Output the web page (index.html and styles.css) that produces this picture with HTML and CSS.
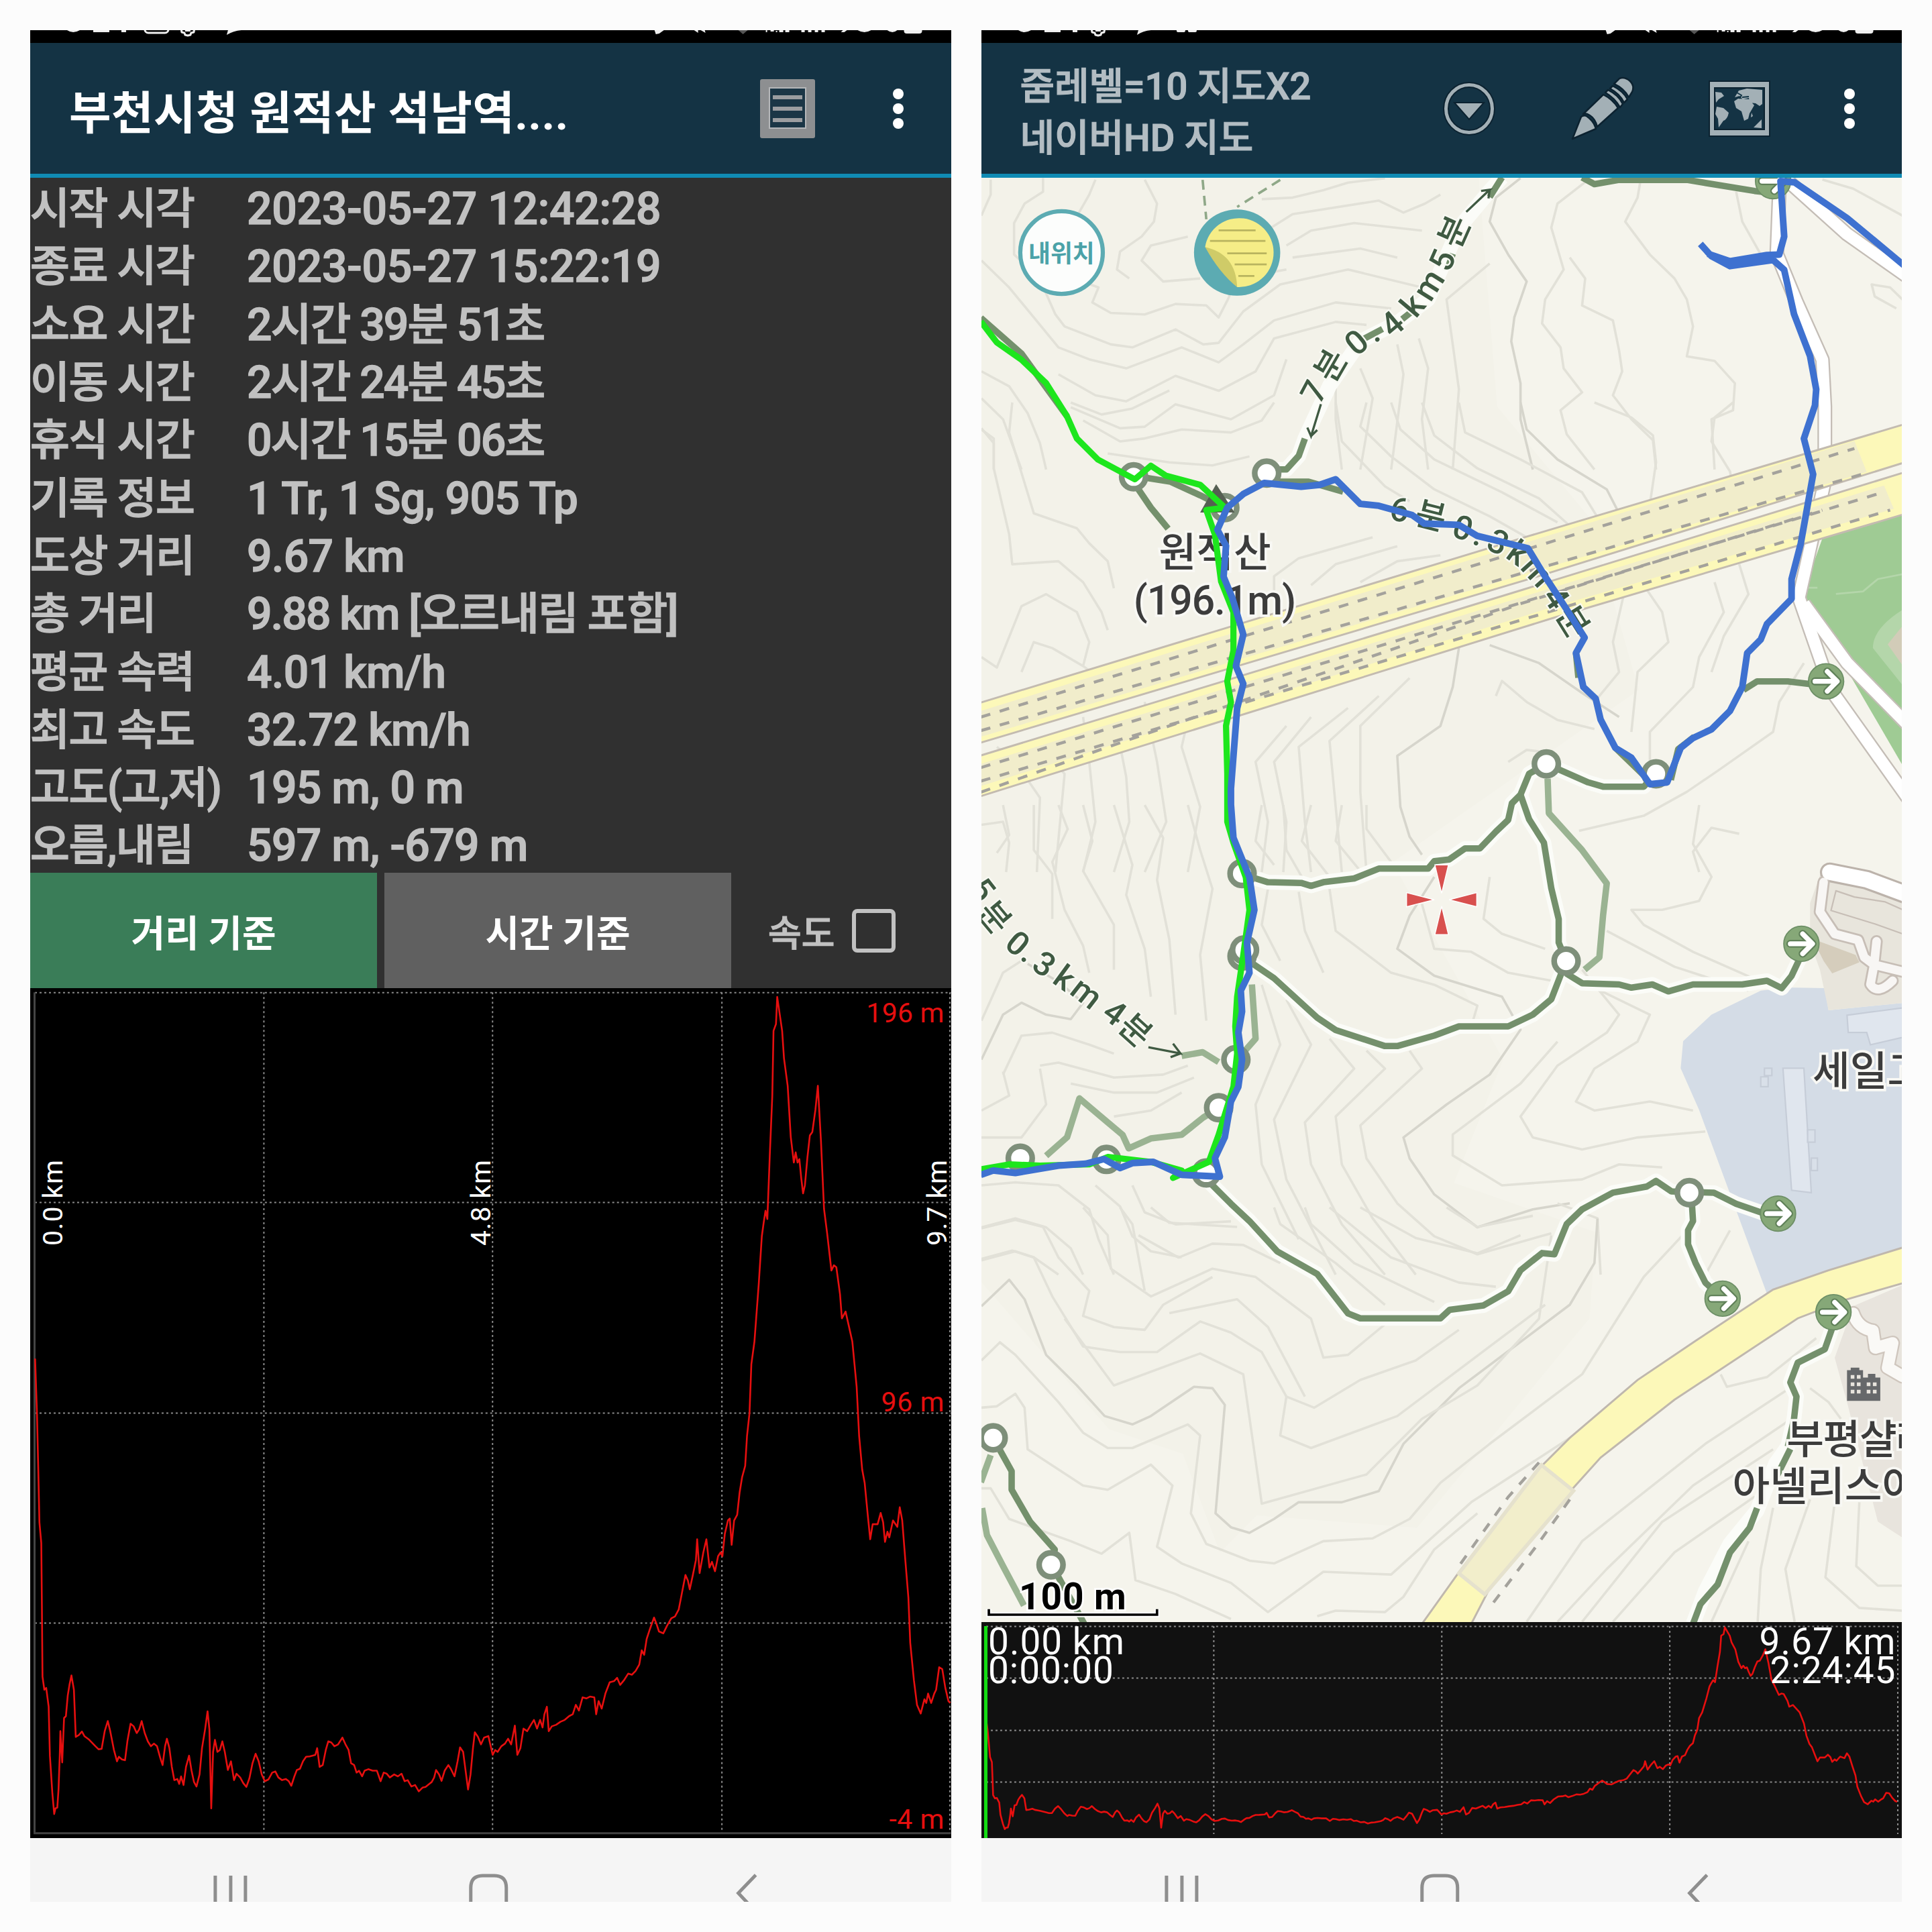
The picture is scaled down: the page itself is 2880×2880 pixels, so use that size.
FILE: index.html
```
<!DOCTYPE html>
<html lang="ko">
<head>
  <meta charset="UTF-8">
  <meta name="viewport" content="width=device-width, initial-scale=1.0">
  <title>부천시청 원적산 석남역</title>
  <link rel="stylesheet" href="styles.css">
</head>
<body>
  <!-- Shared shapes -->
  <svg class="defs" width="0" height="0">
    <defs>
      <polyline id="profile" points="57,45 60,190 62,330 64,480 67,535 68,700 69,890 72,925 75,920 79,970 81,1100 85,1200 88,1255 90,1240 93,1238 95,1190 97,1100 98,1035 101,1118 104,1000 107,995 110,940 113,910 116,887 120,925 123,1050 128,1045 133,1036 137,1048 145,1058 155,1075 160,1083 165,1082 170,1035 175,1008 179,1035 185,1085 190,1115 193,1103 198,1110 203,1112 207,1060 212,1015 217,1022 222,1040 226,1030 230,1008 235,1040 240,1062 245,1075 250,1068 255,1075 260,1105 264,1125 268,1075 271,1055 275,1080 279,1130 283,1165 288,1162 291,1175 294,1155 298,1178 302,1130 307,1100 311,1140 315,1170 319,1182 324,1150 328,1080 333,1030 337,982 340,1030 343,1240 346,1090 349,1058 353,1090 357,1085 361,1062 365,1090 370,1138 375,1115 380,1165 384,1148 390,1158 395,1173 400,1183 405,1160 410,1120 415,1095 420,1115 425,1150 430,1168 436,1163 442,1145 447,1142 452,1158 458,1165 464,1162 469,1168 473,1180 478,1155 482,1138 487,1135 492,1115 497,1103 503,1102 512,1098 515,1080 519,1130 524,1125 529,1085 533,1062 538,1065 543,1075 549,1070 556,1052 561,1070 566,1085 570,1120 575,1125 579,1145 583,1140 588,1155 592,1140 598,1136 605,1140 612,1140 618,1168 623,1145 628,1148 633,1158 640,1150 646,1155 652,1148 657,1168 662,1165 668,1182 674,1178 680,1195 686,1185 691,1183 697,1175 701,1170 705,1158 708,1138 713,1150 717,1167 722,1140 728,1125 732,1135 738,1155 743,1115 747,1078 752,1090 756,1140 760,1190 764,1150 768,1080 771,1038 776,1050 781,1070 786,1052 793,1048 800,1098 804,1085 808,1090 814,1075 820,1068 825,1055 830,1070 836,1020 840,1098 845,1080 850,1028 856,1035 862,1018 867,1005 872,1028 877,1005 881,1025 884,990 888,970 891,1035 896,1022 903,1018 910,1010 917,1005 924,995 930,990 935,965 940,980 946,945 952,948 958,943 965,945 968,990 972,955 977,975 983,935 990,905 997,902 1002,893 1007,912 1013,900 1020,882 1026,885 1032,875 1038,858 1042,820 1046,832 1050,790 1055,765 1062,733 1066,750 1070,770 1077,775 1083,755 1090,735 1096,730 1102,712 1107,670 1113,620 1117,635 1120,658 1125,620 1130,580 1132,525 1136,615 1142,560 1147,525 1152,600 1156,585 1161,610 1166,570 1170,560 1173,570 1177,510 1182,475 1185,470 1188,540 1192,475 1197,460 1201,400 1205,360 1210,330 1213,250 1217,190 1220,60 1225,0 1232,-153 1237,-280 1240,-316 1243,-348 1246,-326 1250,-498 1254,-653 1256,-826 1260,-844 1262,-916 1266,-871 1270,-826 1273,-753 1279,-680 1284,-544 1289,-476 1292,-503 1295,-476 1298,-485 1301,-435 1304,-394 1307,-416 1311,-489 1315,-548 1319,-557 1324,-616 1328,-680 1333,-535 1338,-353 1343,-289 1350,-189 1354,-203 1358,-198 1364,-126 1367,-62 1373,-80 1378,-44 1384,0 1391,120 1395,250 1400,340 1404,375 1409,460 1413,525 1417,485 1425,485 1430,455 1434,480 1437,532 1441,505 1444,520 1450,475 1457,492 1461,440 1465,475 1470,580 1475,680 1478,800 1484,900 1489,965 1495,988 1501,950 1504,960 1507,935 1512,960 1517,935 1520,925 1525,865 1530,870 1535,920 1540,955 1543,960"/>

      <g id="status-right">
        <path d="M931 0 L933 6 L938 5 L945 0 Z M990 0 L996 4 L996 0 Z M1000 0 L1007 4 L1006 0 Z"/>
        <path d="M1056 0 L1063 6 L1070 0 Z" fill="#555"/>
        <path d="M1097 0h2v3h-2z M1104 0h5v2h-5z M1112 1h2v2h-2z M1117 0h6v3h-6z M1126 0h6v3h-6z"/>
        <path d="M1150 0h5v3h-5z M1160 0h5v3h-5z M1170 0h5v3h-5z M1180 0h5v3h-5z M1209 3l3-3h6l-4 3z"/>
        <path d="M1234 0q10 6 20 0z M1278 0q8 6 15 0z"/>
        <rect x="1303" y="-6" width="27" height="11" rx="4"/>
      </g>
      <g id="clock">
        <path d="M55 0q9 6 19 0z M94 0h24v3h-24z M136 0h7v3h-7z"/>
      </g>
      <g id="gear">
        <path d="M-10 -3l1 6l4 1l1 3l4 1l4-1l1-3l4-1l1-6" fill="none" stroke="#eee" stroke-width="3" stroke-linejoin="round"/>
        <path d="M-4 0h8v2h-8z"/>
      </g>

      <g id="nav-icons" fill="none" stroke="#8e8e8e" stroke-width="5">
        <path d="M276 56V96 M299 56V96 M321 56V96"/>
        <path d="M657 96V74Q657 56 675 56H692Q710 56 710 74V96"/>
        <path d="M1082 55L1056 82L1070 97"/>
      </g>

      <g id="node"><circle r="9.7" fill="#fff" stroke="#7e8f7a" stroke-width="4.6"/></g>
      <g id="badge">
        <circle r="14.3" fill="#86a878" stroke="#6d8f66" stroke-width="1"/>
        <path d="M-9 0H8 M1 -8L9 0L1 8" fill="none" stroke="#5f8058" stroke-width="6.5" stroke-linecap="round" stroke-linejoin="round"/>
        <path d="M-9 0H8 M1 -8L9 0L1 8" fill="none" stroke="#fff" stroke-width="4" stroke-linecap="round" stroke-linejoin="round"/>
      </g>
    </defs>
  </svg>

  <div class="phone">
    <svg class="status" viewBox="0 0 1373 19">
      <use href="#clock"/>
      <rect x="171" y="-12" width="35" height="16" rx="5" fill="none" stroke="#eee" stroke-width="3"/>
      <use href="#gear" x="235" y="0"/>
      <path d="M293 7L295 0H315Q303 1 293 7Z"/>
      <use href="#status-right"/>
    </svg>

    <div class="appbar">
      <h1>부천시청 원적산 석남역....</h1>
      <svg class="icon-list" viewBox="0 0 84 90">
        <rect x="1" y="1" width="82" height="88" rx="3" fill="#8d8f91"/>
        <rect x="15" y="14" width="54" height="60" fill="#1b3646" stroke="#b5b7b9" stroke-width="2"/>
        <path d="M20 28H64 M20 45H64 M20 62H64" stroke="#9b9da0" stroke-width="6"/>
      </svg>
      <div class="dots"><i></i><i></i><i></i></div>
    </div>

    <div class="stats">
      <div class="row"><span>시작 시각</span><b class="num">2023-05-27 12:42:28</b></div>
      <div class="row"><span>종료 시각</span><b class="num">2023-05-27 15:22:19</b></div>
      <div class="row"><span>소요 시간</span><b class="dur">2시간 39분 51초</b></div>
      <div class="row"><span>이동 시간</span><b class="dur">2시간 24분 45초</b></div>
      <div class="row"><span>휴식 시간</span><b class="dur">0시간 15분 06초</b></div>
      <div class="row"><span>기록 정보</span><b>1 Tr, 1 Sg, 905 Tp</b></div>
      <div class="row"><span>도상 거리</span><b>9.67 km</b></div>
      <div class="row"><span>총 거리</span><b class="dur">9.88 km [오르내림 포함]</b></div>
      <div class="row"><span>평균 속력</span><b>4.01 km/h</b></div>
      <div class="row"><span>최고 속도</span><b>32.72 km/h</b></div>
      <div class="row"><span>고도(고,저)</span><b>195 m, 0 m</b></div>
      <div class="row"><span>오름,내림</span><b>597 m, -679 m</b></div>
    </div>

    <div class="tabs">
      <div class="tab active">거리 기준</div>
      <div class="tab">시간 기준</div>
      <div class="speed">속도<i class="box"></i></div>
    </div>

    <svg class="chart" viewBox="0 0 1373 1267">
      <path class="grid" d="M7 6.5H1373 M7 319.5H1373 M7 633.5H1373 M7 946.5H1373 M348.5 6V1260 M689.5 6V1260 M1031.5 6V1260 M1371.5 6V1260"/>
      <path d="M6.5 6V1260H1373" fill="none" stroke="#444" stroke-width="3"/>
      <use href="#profile" class="profile" transform="matrix(.91837 0 0 .5612 -45 527)"/>
      <g class="alt" text-anchor="end">
        <text x="1363" y="51" textLength="116">196 m</text>
        <text x="1363" y="631" textLength="94">96 m</text>
        <text x="1363" y="1253" textLength="82">-4 m</text>
      </g>
      <g class="dist">
        <text transform="translate(48 384) rotate(-90)" textLength="128">0.0 km</text>
        <text transform="translate(686 384) rotate(-90)" textLength="128">4.8 km</text>
        <text transform="translate(1366 384) rotate(-90)" textLength="128">9.7 km</text>
      </g>
    </svg>
    <svg class="nav" viewBox="0 0 1373 95"><use href="#nav-icons"/></svg>
  </div>

  <div class="phone">
    <svg class="status" viewBox="0 0 1373 19">
      <use href="#clock"/>
      <use href="#gear" x="174" y="0"/>
      <path d="M232 7L234 0H253Q241 1 232 7Z"/>
      <rect x="291" y="-6" width="13" height="9" rx="2"/><rect x="308" y="-6" width="13" height="9" rx="2"/>
      <use href="#status-right"/>
    </svg>

    <div class="appbar map-bar">
      <h2>줌레벨=10 지도X2<br>네이버HD 지도</h2>
      <svg class="icon-down" viewBox="0 0 80 84">
        <g stroke="#0c2230" stroke-width="2">
          <path fill-rule="evenodd" fill="#a3b0b6" d="M40 3A38 39 0 1 0 40 81A38 39 0 1 0 40 3Z M40 10A31 32 0 1 1 40 74A31 32 0 1 1 40 10Z"/>
          <path fill="#a3b0b6" d="M18 33H62L40 58Z"/>
        </g>
      </svg>
      <svg class="icon-pencil" viewBox="0 0 94 96">
        <g fill="#a3b0b6" stroke="#0c2230" stroke-width="2.5" stroke-linejoin="round">
          <path d="M2 93L15 60Q19 57 23 59Q33 66 36 75L37 78Z"/>
          <path d="M18 56L48 27Q62 34 70 47L39 75Q36 63 28 58Q22 54 18 56Z"/>
          <path d="M51 24L55 20Q71 28 77 41L73 46Q65 32 51 24Z"/>
          <path d="M58 18L62 14Q78 22 84 34L79 39Q73 26 58 18Z"/>
          <path d="M64 11L72 3Q80 0 88 7Q95 14 91 23L86 31Q79 18 64 11Z"/>
        </g>
      </svg>
      <svg class="icon-world" viewBox="0 0 92 84">
        <path fill-rule="evenodd" fill="#a3b0b6" stroke="#0c2230" stroke-width="2" d="M1 1H91V83H1Z M9 11V73H83V11Z"/>
        <path fill="#a3b0b6" d="M10 17L19 18L23 23L15 28L11 33Z M12 39L22 41L30 48Q28 58 22 60L15 70L14 57L10 50Z M38 31L44 27L60 28L68 37L61 49L59 57L53 60L49 46L41 41Z M39 25L45 15L57 12L80 14V35L76 38L70 34L61 33L60 26L51 28L46 23Z M64 48L66 53L63 55Z M67 70L79 58V71Z"/>
        <path fill="none" stroke="#123344" stroke-width="2" d="M42 18L49 22L46 27 M50 25L60 24"/>
      </svg>
      <div class="dots"><i></i><i></i><i></i></div>
    </div>

    <svg class="map" viewBox="796.5 144.3 747.5 1172.2">
      <!-- Land -->
      <rect x="796" y="144" width="749" height="1173" fill="#f5f4ec"/>
      <path fill="#f3f2e9" d="M796 144H1200L1215 330L1290 420L1330 560L1130 700L1220 860L1180 960L1295 1000L1290 1070L1150 1240L1020 1230L990 1260L960 1180L900 1160L796 1040Z"/>
      <path fill="#d4dce6" d="M1429 804L1450 801.5L1481 802L1484 820L1544 814V1013L1484 1031L1434 1050L1379 901L1364 867L1366 845L1389 823.5Z"/>
      <path fill="#9fcb94" d="M1479 437L1544 413V621L1463 482Z"/>
      <path fill="#b4d6aa" d="M1544 495Q1520 510 1520 526L1544 556Z"/>
      <path fill="#d2ccb8" d="M1544 508L1532 523L1544 540Z"/>
      <path fill="none" stroke="#b4d6aa" stroke-width="1.5" d="M1463 477L1475 477 M1490 482L1512 480L1524 470L1544 466"/>
      <path fill="#e8e5dc" d="M1479 705L1544 733V814L1484 820L1477 787L1469 765L1469 733Z"/>
      <path fill="#d5cdbc" d="M1471 762L1506 775L1509 781L1487 790L1480 780Z"/>
      <path fill="#e8e4dd" d="M1504 1060L1544 1043V1248L1524 1235L1499 1138L1489 1102Z"/>

      <!-- Contour lines -->
      <g class="contour" transform="matrix(.5 0 0 .24306 784 0)">
        <path d="M25,720L40,650 40,600M125,595L125,640 95,680 78,745 78,850 120,930 130,980 145,1050 160,1090 235,1150 270,1160 340,1100 385,1150 410,1145 450,1040 510,950 620,900 740,960M210,600L200,650 175,740 150,790 150,850 175,930 215,960 205,1010 235,1045 290,1050 340,1015 390,1020 410,1060 425,1000 440,930 520,900M290,600L310,680 305,740 285,790 250,840 245,900 265,930M480,665L530,660 580,635 620,610 680,595M400,800L480,780 530,715 670,670 710,710 745,680 770,650M520,820L560,770 630,745 740,770M530,860L640,830 700,860M360,790L300,820 285,870 320,940 380,930M25,870L70,960 110,1060 150,1160 200,1200 260,1230 350,1160 410,1210 450,1150 500,1070 600,1010 690,1030M150,1250L210,1320 260,1340 340,1255 410,1305 470,1240 500,1130 600,1075 650,1085M170,1360L250,1430 290,1425 340,1350 430,1400 500,1320 520,1200M25,1240L70,1290 100,1380 120,1480 130,1568M25,1330L60,1400 90,1568M25,1430L45,1480 45,1568"/>
        <path class="index" d="M900,595L860,660 850,740 880,850 910,940 890,1060 885,1140 900,1280 900,1400 920,1568"/>
        <path d="M1010,600L960,680 950,760 970,900 940,1000 935,1080 965,1160 970,1230 1000,1310 965,1370 975,1450 1020,1568M1095,600L1090,660 1070,740 1110,850 1150,930 1170,1000 1180,1090 1170,1190 1215,1205 1248,1280 1245,1370 1210,1400 1215,1568M1250,640L1260,740 1290,850M850,880L780,1000 790,1150 800,1300 790,1568M735,1130L750,1230 740,1400 750,1568M700,1150L710,1250 690,1568M640,1230L660,1330 640,1568M600,1290L600,1400 610,1568M980,860L1005,930 1000,1020 1050,1070 1060,1170 1065,1240 1050,1320 1080,1400 1115,1470 1120,1568M1390,600L1440,630 1520,720M1520,1000L1500,960 1470,950 1475,990 1510,1030"/>
      </g>
      <g class="contour" transform="matrix(.5 0 0 .24306 784 326.7)">
        <path d="M170,0L220,40 270,20 330,-40M190,60L250,130 290,120 350,90 430,100 480,60 500,0M230,170L330,200 400,210 460,180M75,0L70,100 110,370 180,420 200,470 230,530 240,620M25,90L45,120 45,220 70,440 75,540 150,530 190,600 220,700 230,760M25,850L50,885 90,680 130,640 180,700 200,800 190,880M90,900L110,800 140,820 190,880 230,940 240,1000M600,0L610,130 680,280 720,330M650,0L640,80 690,180 760,290 850,380 910,450M690,0L705,90 760,190 870,300 960,400M740,0L760,110 830,220 930,320 990,430M800,0L810,100 900,190 1000,300 1030,400"/>
        <path class="index" d="M900,0L910,90 960,190 1040,290 1060,370M800,820L790,950 770,1080 700,1180 705,1350 720,1450 740,1510M850,810L930,870 1000,970 1060,1050"/>
        <path d="M1020,0L1080,50 1115,110 1120,200 1110,340M1245,0L1215,50 1210,130 1240,230 1250,340M1070,620L1050,800 1060,900 1020,1000M1090,580L1130,700 1140,800 1090,900 1080,1100M1215,600L1230,700 1190,850 1180,950 1110,1100 1110,1200M1255,540L1270,640 1230,780 1210,900M860,980L870,930 910,1000 960,1060 1020,1090M50,1150L80,1200 120,1320 115,1568M120,1150L160,1240 145,1568M190,1050L200,1200 210,1400 190,1568M240,1040L260,1250 265,1400 240,1568M290,1000L310,1200 325,1400 290,1568M370,970L350,1150 380,1350 360,1568M520,1080L470,1200 490,1400 480,1568M560,1050L500,1200 520,1400 515,1568M620,1020L540,1150 550,1400 560,1568M670,980L590,1130 600,1350 610,1568M720,920L640,1080 640,1300 650,1568M660,450L540,520 500,580 500,640M700,480L600,540 560,610M770,510L700,530 640,600M995,1430L1100,1380 1170,1300 1220,1230 1310,1100 1320,1000 1360,870M1255,1440L1210,1420 1180,1500 1190,1568M25,1410L60,1400 70,1470 65,1568M880,1200L910,1160 930,1165"/>
      </g>
      <g class="contour" transform="matrix(.5 0 0 .24306 784 653.4)">
        <path d="M60,0L70,100 50,160M150,0L165,80 140,190 160,350 190,470 200,560M110,0L110,150 140,230 140,380M190,0L205,120 190,220 240,400 240,550M240,0L270,200 260,300 290,480 300,640M290,0L320,110 310,250 330,450 340,700M360,0L380,150 400,280 380,500 390,720M480,0L470,120 500,200M515,0L520,150 545,240M490,280L480,400 510,520M560,0L545,120 590,240M540,290L550,420 580,560M610,0L600,120 640,220M590,280L600,420 690,560 760,600 830,670 820,740M650,0L650,80 690,190M850,240L840,380 870,430 940,480M1190,0L1180,130 1210,240 1190,320 1130,350 1080,350 1100,400 1180,490 1290,590M1040,420L1150,540 1270,620M1000,550L1060,700 1040,760 960,870 900,1040 920,1110 1000,1150 1090,1110 1200,1090M1030,620L1110,700 1090,790 1020,880 990,990 1020,1020 1110,990 1180,1020M740,330L760,480 820,490 880,560 960,590"/>
        <path class="index" d="M760,240L720,370 700,480 760,570 870,640 900,750 850,900 780,1000 710,1110 720,1180 760,1300 830,1410 920,1350 980,1330"/>
        <path d="M960,790L900,930 790,1100 790,1170 870,1270 1000,1250 1060,1200 1130,1210M720,820L740,880 640,1070 650,1180 700,1330 760,1440 830,1500 950,1430M650,820L680,880 600,1040 610,1200 660,1380 730,1568M590,780L630,880 550,1060 560,1200 610,1400 680,1568M520,650L560,800 500,1050 520,1250 600,1568M480,600L510,800 470,1000 480,1200 540,1450M60,900L90,770 140,760 200,800 240,830M120,870L150,860 240,910 320,900 360,870M170,930L240,960 310,960 370,910M240,1040L300,1020 350,960M25,1110L90,1110 130,1000 120,880M25,1020L70,970 60,890M25,720L60,560 90,520"/>
        <path class="index" d="M25,850L60,700 90,660 130,700 170,715 190,660 150,590 100,530"/>
        <path d="M25,1270L80,1260 150,1270 200,1350 215,1450 240,1568M25,1410L80,1380 130,1410 170,1480 190,1568M25,1520L80,1490 110,1510 150,1568M270,1270L290,1360 340,1400 430,1390M210,1270L250,1340 270,1440 300,1490 350,1510M1030,1568L1025,1380 960,1330M1240,1420L1200,1568"/>
      </g>
      <g class="contour" transform="matrix(.5 0 0 .2257 784 980)">
        <path d="M25,75L80,45 125,70 150,180 200,300 190,390 240,430 290,440 320,350 400,250 M330,380L440,330 490,430 550,680M25,185L75,155 110,180 140,320 190,500 250,520 310,520 380,410 430,450 480,520 520,680 565,720 640,620 730,550 800,440"/>
        <path class="index" d="M25,355L70,260 95,330 130,530 180,640 225,750 270,780 300,750 370,645 400,650 420,710 405,1100 430,1150 460,1170 500,1120 540,1060 610,1060 670,1020 710,850 800,650 980,350 1020,200 1025,40"/>
        <path d="M25,550L55,485 80,530 150,700 190,810 230,865 270,865 360,780 380,820 365,1100 390,1210 460,1270 500,1280 580,1200 660,1190 720,1120 770,990 850,850 1000,600 1100,250 1180,60M25,720L50,715 80,670 95,720 100,870 190,1000 230,1015 300,925 335,1000 310,1220 350,1280 430,1350 490,1455 580,1310 690,1320 750,1200 820,1060 1000,800 1160,530M25,1010L40,1010 70,1120 170,1200 220,1245 265,1170 275,1340 340,1390 430,1480M190,0L230,100 235,220 300,320 400,220 470,250 560,400 580,540 620,530 680,420M250,0L270,60 290,300M300,0L330,55 440,70M280,100L345,180 400,130 450,135 510,200M160,400L240,640 380,525 450,600 480,1065 650,960 740,760 830,640 930,400 950,100M520,680L510,820 560,865 700,750 940,350M500,0L510,60 600,200 680,350M550,0L560,60 630,200 760,340M590,0L690,180 800,270 860,285M640,0L730,110 830,165 900,100M780,0L830,70 920,30M570,1470L600,1450 680,1455 710,1400 760,1230 830,1100M1225,600L1235,645 1300,610 1380,470M1330,660L1200,850 1000,1200 910,1490M1340,760L1180,1000 1040,1300 960,1490M1310,870L1130,1130 1000,1490M1280,1040L1150,1240 1050,1490M1270,1200L1210,1490M1310,1080L1290,1300 1285,1490M1370,1050L1330,1300 1345,1490M1410,1060L1395,1330 1450,1440 1520,1450M1450,1060L1445,1290 1480,1360 1520,1360M1370,650L1400,700 1420,760"/>
      </g>

      <!-- Buildings -->
      <g fill="#e0e6ee" stroke="#c6cdd8" stroke-width="1.2">
        <path d="M1447 867L1464 867L1470 968L1454 966Z M1499 824L1544 818V842L1518 848L1515 838L1500 838Z"/>
        <path d="M1432 867h6v6h-6z M1429 874h6v8h-6z M1467 917h6v10h-6z M1470 940h5v10h-5z" fill="#d9e0e9"/>
      </g>
      <g fill="none" stroke-linejoin="round" stroke-linecap="round">
        <path d="M1485 708L1515 714L1550 727" stroke="#bcb3ab" stroke-width="16"/>
        <path d="M1480 716L1477 740L1489 758L1508 763L1513 777L1521 783L1518 799Q1524 808 1536 796 M1523 764L1521 783L1550 790" stroke="#c7beb6" stroke-width="10"/>
        <path d="M1485 708L1515 714L1550 727" stroke="#fff" stroke-width="12.5"/>
        <path d="M1480 716L1477 740L1489 758L1508 763L1513 777L1521 783L1518 799Q1524 808 1536 796 M1523 764L1521 783L1550 790" stroke="#f8f6f4" stroke-width="7"/>
        <path d="M1490 723L1505 728L1530 732L1550 741 M1490 723L1486 739L1522 750L1550 760" stroke="#c7beb6" stroke-width="1.2"/>
        <path d="M1504 1066Q1508 1078 1520 1080L1522 1094L1536 1090L1532 1110L1544 1117" stroke="#cfc6bd" stroke-width="12"/>
        <path d="M1504 1066Q1508 1078 1520 1080L1522 1094L1536 1090L1532 1110L1544 1117" stroke="#faf9f6" stroke-width="9.5"/>
      </g>

      <!-- White roads -->
      <g class="road-edge">
        <path d="M1444 155L1442 206L1458 245L1479 292L1481 330V390L1471 436L1460 485L1486 560L1550 650"/>
        <path d="M1450 146L1499 190L1550 226 M1464 490L1499 538L1550 590"/>
      </g>
      <g class="road">
        <path d="M1444 155L1442 206L1458 245L1479 292L1481 330V390L1471 436L1460 485L1486 560L1550 650"/>
        <path d="M1450 146L1499 190L1550 226 M1464 490L1499 538L1550 590"/>
      </g>

      <!-- Highway tunnel -->
      <g stroke="#c3bbb0" stroke-width="1.6">
        <path fill="#fcf8b9" d="M790 572L1241 435L1550 343V374L1241 470L790 604.5Z"/>
        <path fill="#fcf8b9" d="M790 615L1236 478.6L1550 382V416L1259 502L790 648Z"/>
      </g>
      <path fill="#f1edcb" d="M796 577L1505 358L1515 383L796 598Z M796 620L1529 394L1537 413L1259 493L796 638Z"/>
      <path class="dash" d="M796 582L1505 364 M796 593L1511 385 M796 623L1530 399 M796 634L1534 414"/>
      <path class="dash" d="M796 643L900 606L1130 527L1234 490L1479 414"/>

      <!-- Yellow road -->
      <path fill="#fcf8b9" stroke="#bfb7ad" stroke-width="1.6" d="M1154 1318L1184 1276L1249 1192L1274 1167L1329 1120L1376.5 1088L1439 1046.6L1484 1031L1546 1012V1041L1499 1054.5L1459 1070L1394 1113L1359 1136L1299 1183L1276.5 1208L1209 1289L1194 1318Z"/>
      <path fill="#f2eecb" stroke="#e5e1cd" stroke-width="3" d="M1251 1189L1277 1210L1205 1294L1184 1277Z"/>
      <path class="dash" d="M1249 1187L1224 1215L1184 1271 M1274 1217L1246 1256L1211 1302"/>

      <!-- Hiking trails -->
      <g class="halo">
        <path d="M1019 713L1029 716L1056 716.6L1064 719L1074 716L1099 713L1119 705H1159L1164 699L1176 697.6L1189 688.6H1201L1214 675L1224 665.5L1227 652L1234 645L1241 628L1255 620L1264 624L1289 635L1301 638.5H1334L1344 628"/>
        <path d="M1234 645L1241 665L1253 684L1259 721L1265 746V765L1271 780L1259 811L1244 823.5L1224 833H1184L1164 840.5L1134 849H1124L1084 836L1069 826L1034 794L1012 779"/>
        <path d="M1271 790L1284 798L1314 799L1324 801.6L1341 799L1354 804.6L1374 799H1414L1434 796L1446 802L1454 792L1462 775"/>
        <path d="M979 957L999 977L1014 991L1036.5 1015.6L1069 1034L1094 1066L1104 1070H1169L1176.5 1063L1204 1059.5L1224 1048L1234 1031L1251.5 1017L1261.5 1018L1271.5 993.5L1284 981.5L1309 968L1336.5 963L1344 958.5L1356.5 967L1391 968L1409 977L1435 986"/>
        <path d="M1373 975L1374 991L1370 998.5V1010L1376 1025L1384 1041L1397 1053 M1488 1075L1481 1095L1459 1106L1453 1122L1458 1133.5L1456 1151.5L1451 1174L1441 1188L1426 1226L1404 1253L1384 1291.5L1374 1318"/>
        <path d="M1036 381L1044 381L1054 370L1059 356L1079 313L1104 277L1134 262L1159 243L1184 185L1209 155L1219 144"/>
      </g>
      <g class="trail light">
        <path d="M1256 632L1257 660L1284 690L1304 717L1301 743L1298 777L1286 787 M849 938L866 923L876 891.5L899 911L911 921L916 932L934 924L959 921L976.5 907L988 900 M959 857L976 854L989 862 M1016 799L1019 843L1004 860 M804 1181L796 1203 M797 1224L801 1246L814 1271L831 1303"/>
      </g>
      <g class="trail">
        <path d="M1019 713L1029 716L1056 716.6L1064 719L1074 716L1099 713L1119 705H1159L1164 699L1176 697.6L1189 688.6H1201L1214 675L1224 665.5L1227 652L1234 645L1241 628L1255 620L1264 624L1289 635L1301 638.5H1334L1344 628"/>
        <path d="M1234 645L1241 665L1253 684L1259 721L1265 746V765L1271 780L1259 811L1244 823.5L1224 833H1184L1164 840.5L1134 849H1124L1084 836L1069 826L1034 794L1012 779"/>
        <path d="M1271 790L1284 798L1314 799L1324 801.6L1341 799L1354 804.6L1374 799H1414L1434 796L1446 802L1454 792L1462 775"/>
        <path d="M979 957L999 977L1014 991L1036.5 1015.6L1069 1034L1094 1066L1104 1070H1169L1176.5 1063L1204 1059.5L1224 1048L1234 1031L1251.5 1017L1261.5 1018L1271.5 993.5L1284 981.5L1309 968L1336.5 963L1344 958.5L1356.5 967L1391 968L1409 977L1435 986"/>
        <path d="M1373 975L1374 991L1370 998.5V1010L1376 1025L1384 1041L1397 1053 M1488 1075L1481 1095L1459 1106L1453 1122L1458 1133.5L1456 1151.5L1451 1174 M1453 1176L1441 1200 M1426 1224L1420 1240L1404 1260L1394 1286L1380 1302L1374 1318"/>
        <path d="M806 1167L821 1194V1209L836 1235L856 1257.6L854 1271L880 1318 M1415 560L1426 553H1451L1476 556 M919 390L934 412L948 429 M925 387L950 391L974 402L990 410 M1036 381L1044 381L1054 370L1059 356 M1209 160L1219 144 M1284 144L1294 149.5L1314 146L1369 146L1424 155L1442 157 M1028 391H1062L1090 399"/>
        <path d="M796 258L829 287L866 338 M1311 607L1339 634 M1356 633L1362 608L1375 598 M1279 530L1281 550 M1107 275L1122 267 M1138 259L1147 252 M1176 215L1179 206"/>
      </g>
      <path class="path-dash" d="M976 146L979 178 M1039 146L1004 168"/>

      <use href="#node" x="920" y="387"/><use href="#node" x="1028" y="384"/>
      <use href="#node" x="1255" y="620"/><use href="#node" x="1344" y="628"/>
      <use href="#node" x="1008" y="709"/><use href="#node" x="1008" y="776"/><use href="#node" x="1010" y="771"/>
      <use href="#node" x="1003" y="860"/><use href="#node" x="989" y="899"/>
      <use href="#node" x="828" y="940"/><use href="#node" x="898" y="941"/>
      <use href="#node" x="979" y="952"/><use href="#node" x="1271" y="780"/>
      <use href="#node" x="1371" y="968"/><use href="#node" x="806" y="1167"/>
      <use href="#node" x="853" y="1270"/><use href="#node" x="994" y="412"/>
      <use href="#badge" x="1482" y="553"/><use href="#badge" x="1462" y="766"/>
      <use href="#badge" x="1443" y="985"/><use href="#badge" x="1398" y="1054"/>
      <use href="#badge" x="1488" y="1065"/><use href="#badge" x="1439" y="147"/>
      <path d="M987 393L1002 416H974Z" fill="#555f52"/>

      <!-- Map labels -->
      <g class="trail-label">
        <text transform="translate(1071 329) rotate(-62)">7</text>
        <text transform="translate(1082 312) rotate(-60)">분</text>
        <text transform="translate(1101 290) rotate(-40)">0</text>
        <text transform="translate(1116 279) rotate(-38)">.</text>
        <text transform="translate(1130 275) rotate(-40)">4</text>
        <text transform="translate(1149 259) rotate(-50)">k</text>
        <text transform="translate(1161 246) rotate(-58)">m</text>
        <text transform="translate(1176 222) rotate(-66)">5</text>
        <text transform="translate(1184 203) rotate(-66)">분</text>
        <text transform="translate(1127 422) rotate(8)">6</text>
        <text transform="translate(1147 425) rotate(14)">분</text>
        <text transform="translate(1177 435) rotate(18)">0</text>
        <text transform="translate(1194 441) rotate(22)">.</text>
        <text transform="translate(1205 445) rotate(26)">3</text>
        <text transform="translate(1221 452) rotate(36)">k</text>
        <text transform="translate(1233 461) rotate(48)">m</text>
        <text transform="translate(1251 484) rotate(56)">4</text>
        <text transform="translate(1262 499) rotate(58)">분</text>
        <text transform="translate(785 722) rotate(52)">5</text>
        <text transform="translate(792 741) rotate(50)">분</text>
        <text transform="translate(814 768) rotate(40)">0</text>
        <text transform="translate(827 778) rotate(36)">.</text>
        <text transform="translate(836 786) rotate(34)">3</text>
        <text transform="translate(853 797) rotate(36)">k</text>
        <text transform="translate(867 806) rotate(38)">m</text>
        <text transform="translate(893 825) rotate(36)">4</text>
        <text transform="translate(906 835) rotate(42)">분</text>
      </g>
      <path fill="none" stroke="#3f5a42" stroke-width="1.8" d="M1072 328L1064 354L1061 347 M1064 354L1069 349 M1190 172L1209 154L1202 155 M1209 154L1208 161 M932 850L958 855L952 847 M958 855L950 858"/>
      <g class="place" text-anchor="middle">
        <text x="986" y="460">원적산</text>
        <text x="986" y="499" textLength="132">(196.1m)</text>
      </g>
      <g class="place">
        <text x="1471" y="881">세일고</text>
        <text class="tight" x="1450" y="1180">부평샬레</text>
        <text x="1406" y="1218">아넬리스아</text>
      </g>
      <path fill="#66686a" fill-rule="evenodd" d="M1499 1137V1112H1502V1110H1509V1112H1512V1118H1516V1115H1522V1118H1526V1137Z M1502 1116v3h3v-3z M1507 1116v3h3v-3z M1502 1122v3h3v-3z M1507 1122v3h3v-3z M1502 1128v3h3v-3z M1507 1128v3h3v-3z M1515 1122v3h3v-3z M1520 1122v3h3v-3z M1515 1128v3h3v-3z M1520 1128v3h3v-3z"/>

      <!-- Recorded tracks -->
      <path class="track green" d="M796 261L809 278L829 292L849 311L866 338L874 356L891 373L921 389L934 378L946 386L974 393.5L994 412L979 414L986 434L991 472L1001 497V528L996 553L999 570L995 589L996 628V667L1001 684L1011 712L1014 738.5L1009 775L1004 809L1002.5 833L1004 855L1001 882L989 921L981 943L952 956L959 950L934 943L899 939L884 945L844 946L819 945L796 949"/>
      <path class="track blue" d="M796 953.5L806 950L824 952L859 946L881 944.5L896 940.7L909 948L919 944L936 943L959 953.5L990 955L986 940L994 923L999 894L1005 882L1008 860L1005 838L1008 821L1007 804L1014 789.5L1012 765L1018 738.5L1014 712L1001 680L999 653V640L1004 575L1009 555L1003 540.6L1009 515L1000 485L993 468L995 443L988 430L996 412L1009 401L1026 392L1056 395L1071 393.5L1084 389L1104 409L1119 410.5L1146 418L1156 425L1184 426L1199 435L1240 445L1254 468L1271 494L1286 517.5L1279 530L1285 557.6L1295 567L1299 584L1311 607L1324 615L1339 636.5L1353 635L1364 607L1374 599L1389 592L1404 577L1414 557.6L1418 530L1429 519L1434 506.5L1454 486V470L1461.5 441L1471.5 385L1464 356L1473 329L1474 316L1469 289L1456 255L1448 219L1439 211L1404 216L1389 208L1380 198 M1386 206L1404 212L1434 207L1444 206.6L1448 192L1445 147L1456.5 148L1499 177L1546 216"/>

      <!-- Crosshair and scale -->
      <path fill="#d8504e" stroke="#fff" stroke-width=".8" d="M1164.5 702H1175.5L1170 725Z M1164.5 758.5H1175.5L1170 735.5Z M1141.5 724.5V736L1164 730.3Z M1198.5 724.5V736L1176 730.3Z"/>
      <text class="scale" x="827" y="1306" textLength="87">100 m</text>
      <path d="M802.5 1306V1310.5H939V1306" fill="none" stroke="#fff" stroke-width="4"/>
      <path d="M802.5 1306V1310.5H939V1306" fill="none" stroke="#000" stroke-width="2"/>

      <!-- Floating buttons -->
      <circle cx="861.5" cy="205" r="33.5" fill="#fcfdfc" stroke="#5cabb2" stroke-width="3.4"/>
      <text class="here" x="861.5" y="213" text-anchor="middle">내위치</text>
      <circle cx="1004" cy="205" r="35" fill="#5cabb2"/>
      <path fill="#f5ed87" d="M978 200.5A28 28 0 1 1 1004 233Q1001 214 978 200.5Z"/>
      <path fill="#cfcb68" d="M978 200.5Q1003 206 1004 233Q990 222 978 200.5Z"/>
      <path stroke="#b9b45f" stroke-width="1.5" d="M989 187H1019 M982 195.6H1027 M996 205.6H1028 M1002 214.6H1028 M1005 224H1018"/>
    </svg>

    <svg class="mini-chart" viewBox="0 0 1373 322">
      <path class="grid" d="M7 6.5H1366 M7 83.5H1366 M7 161.5H1366 M7 238.5H1366 M346.5 6V316 M686.5 6V316 M1026.5 6V316 M1366.5 6V316"/>
      <use href="#profile" class="profile" transform="matrix(.91467 0 0 .13856 -45.7 134.7)"/>
      <path d="M6.5 6V322" stroke="#14dc14" stroke-width="5"/>
      <text x="10" y="48" textLength="203">0.00 km</text>
      <text x="10" y="91" textLength="187">0:00:00</text>
      <text x="1363" y="48" text-anchor="end" textLength="203">9.67 km</text>
      <text x="1363" y="91" text-anchor="end" textLength="187">2:24:45</text>
    </svg>
    <svg class="nav" viewBox="0 0 1373 95"><use href="#nav-icons"/></svg>
  </div>
</body>
</html>
```
FILE: styles.css
```
* {
  margin: 0;
  padding: 0;
  box-sizing: border-box;
}

body {
  display: flex;
  gap: 45px;
  padding: 45px;
  height: 2880px;
  background: #fcfcfc;
  font-family: Roboto, "Noto Sans CJK KR", sans-serif;
  overflow: hidden;
}

svg {
  display: block;
  overflow: hidden;
}

.defs {
  position: absolute;
}

.phone {
  display: flex;
  flex-direction: column;
  width: 1373px;
  height: 2790px;
  background: #303030;
  overflow: hidden;
}

.status {
  height: 19px;
  background: #000;
  fill: #eee;
}

/* App bar */
.appbar {
  display: flex;
  align-items: center;
  height: 201px;
  padding: 0 71px 0 58px;
  background: #143344;
  border-bottom: 6px solid #108bb4;
}

.map-bar {
  padding-right: 70px;
}

.appbar h1 {
  flex: 1;
  padding-top: 3px;
  font-size: 68px;
  font-weight: 700;
  letter-spacing: 0.4px;
  color: #fff;
  white-space: nowrap;
}

.appbar h2 {
  flex: 1;
  padding-top: 12px;
  font-size: 56px;
  font-weight: 500;
  line-height: 77px;
  color: #b3bdc3;
  -webkit-text-stroke: 1.2px #b3bdc3;
  white-space: nowrap;
}

.icon-list {
  width: 84px;
  height: 90px;
  margin-right: 115px;
}

.icon-down {
  width: 80px;
  height: 84px;
  margin-right: 112px;
}

.icon-pencil {
  width: 94px;
  height: 96px;
  margin-right: 111px;
}

.icon-world {
  width: 92px;
  height: 84px;
  margin-right: 110px;
}

.dots {
  display: flex;
  flex-direction: column;
  gap: 6px;
}

.dots i {
  width: 16px;
  height: 16px;
  border-radius: 50%;
  background: #fff;
}

/* Track statistics */
.stats {
  height: 1036px;
  padding-top: 4px;
}

.row {
  display: flex;
  align-items: center;
  height: 86.3px;
  color: #c1c1c1;
  font-size: 66px;
  font-weight: 500;
  line-height: 86px;
  letter-spacing: -0.6px;
  -webkit-text-stroke: 1.4px #c1c1c1;
  white-space: nowrap;
}

.row span {
  width: 323px;
  font-size: 64px;
  letter-spacing: -1.4px;
}

.row b {
  font-weight: 500;
}

.row .num {
  letter-spacing: -0.2px;
}

.row .dur {
  letter-spacing: -1.8px;
}

.tabs {
  display: flex;
  gap: 11px;
  height: 172px;
}

.tab {
  display: flex;
  align-items: center;
  justify-content: center;
  width: 517px;
  background: #606060;
  color: #fff;
  font-size: 55px;
  font-weight: 700;
}

.tab.active {
  background: #3a7d58;
}

.speed {
  display: flex;
  align-items: center;
  gap: 26px;
  margin-left: 44px;
  color: #c1c1c1;
  font-size: 54px;
  font-weight: 500;
  -webkit-text-stroke: 1.2px #c1c1c1;
}

.box {
  width: 65px;
  height: 65px;
  border: 6px solid #c1c1c1;
  border-radius: 8px;
}

/* Elevation charts */
.chart {
  height: 1267px;
  background: #000;
}

.grid {
  fill: none;
  stroke: #8a8a8a;
  stroke-width: 2;
  stroke-dasharray: 3 4;
}

.profile {
  fill: none;
  stroke: #e60f0f;
  stroke-width: 2.6px;
  stroke-linejoin: round;
}

.profile,
#profile {
  vector-effect: non-scaling-stroke;
}

.alt text {
  fill: #e60f0f;
  font-size: 41px;
}

.dist text {
  fill: #fff;
  font-size: 41px;
}

.mini-chart {
  height: 322px;
  background: #111;
}

.mini-chart text {
  fill: #fff;
  font-size: 55px;
}

.nav {
  height: 95px;
  background: #f5f5f5;
}

/* Map */
.map {
  width: 1373px;
  height: 2153px;
}

.contour path {
  fill: none;
  stroke: #e2e1d8;
  stroke-width: 3.6px;
  stroke-linejoin: round;
  vector-effect: non-scaling-stroke;
}

.contour .index {
  stroke: #d6d5cc;
}

.road,
.road-edge,
.trail,
.halo,
.track {
  fill: none;
  stroke-linejoin: round;
}

.road-edge {
  stroke: #c4bdb6;
  stroke-width: 12;
}

.road {
  stroke: #fff;
  stroke-width: 9.5;
}

.dash {
  fill: none;
  stroke: #a4a29c;
  stroke-width: 2.4;
  stroke-dasharray: 8 8;
}

.halo {
  stroke: #fbfcf8;
  stroke-width: 12;
}

.trail {
  stroke: #74906c;
  stroke-width: 5.2;
}

.trail.light {
  stroke: #9ab392;
}

.path-dash {
  stroke: #8fa888;
  stroke-width: 2;
  stroke-dasharray: 8 5;
}

.trail-label text {
  fill: #3f5a42;
  stroke: #f8f9f3;
  stroke-width: 2.5;
  paint-order: stroke;
  font-size: 27px;
  font-weight: 500;
}

.place text {
  fill: #3c3c3c;
  stroke: #f8f8f4;
  stroke-width: 4;
  paint-order: stroke;
  font-size: 33px;
  font-weight: 500;
}

.place .tight {
  letter-spacing: -0.8px;
}

.track.green {
  stroke: #1de61d;
  stroke-width: 5;
}

.track.blue {
  stroke: #3e71d0;
  stroke-width: 5.4;
}

.scale {
  fill: #000;
  stroke: #fff;
  stroke-width: 3;
  paint-order: stroke;
  font-size: 30px;
  font-weight: 700;
}

.here {
  fill: #4ba2a8;
  font-size: 19.5px;
  font-weight: 700;
}
```
